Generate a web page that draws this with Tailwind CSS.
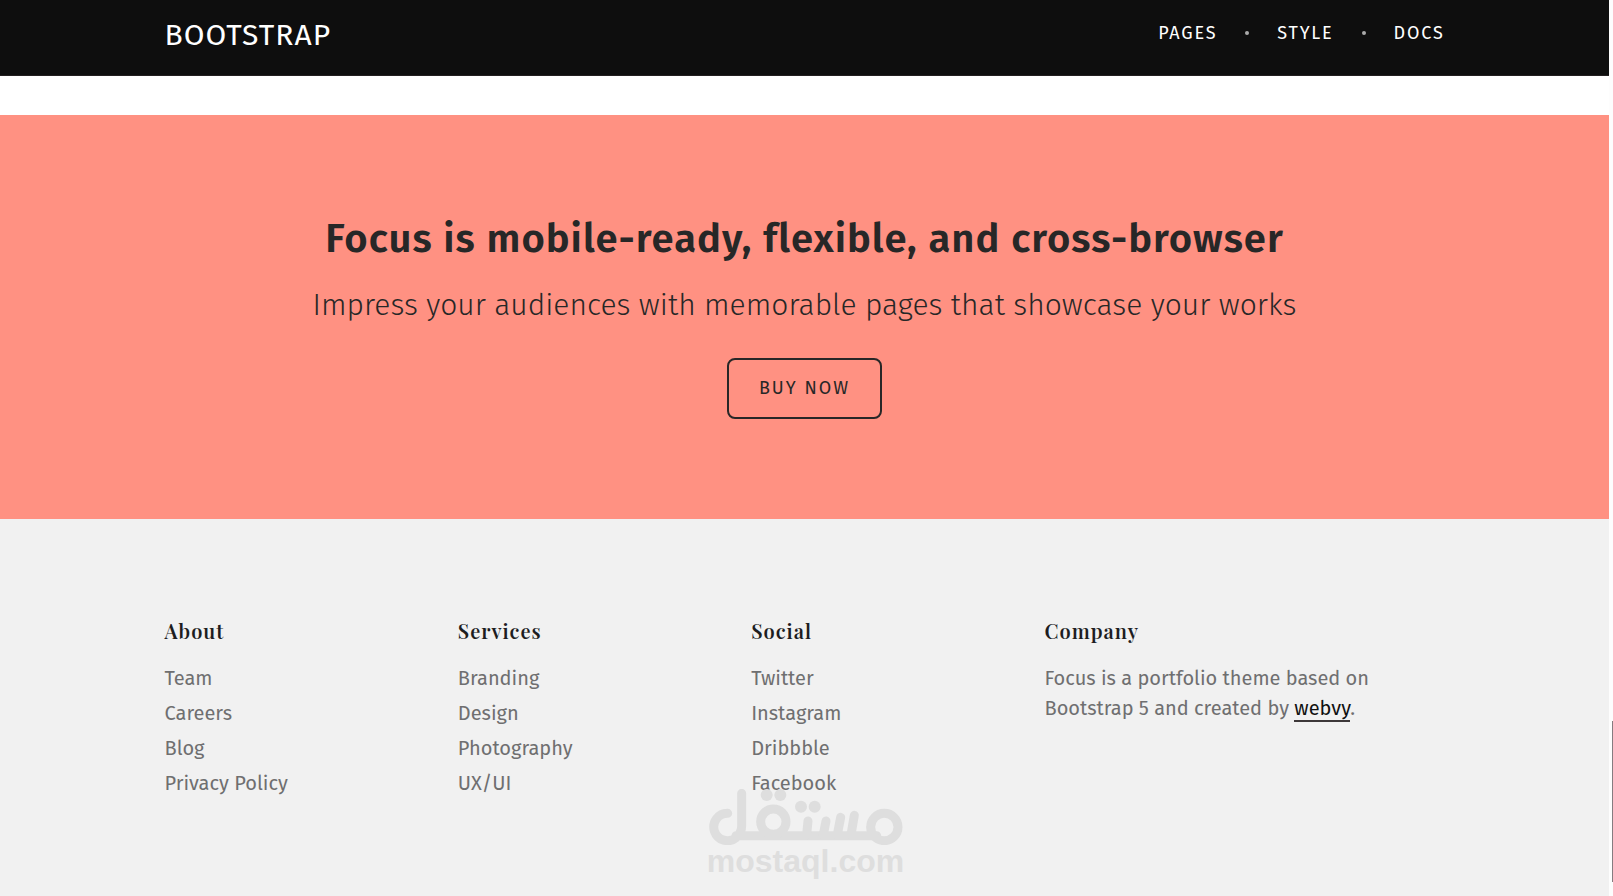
<!DOCTYPE html>
<html lang="en">
<head>
<meta charset="utf-8">
<meta name="viewport" content="width=device-width, initial-scale=1">
<title>Focus</title>
<script src="https://cdn.jsdelivr.net/npm/@tailwindcss/browser@4"></script>
</head>
<body class="relative flex min-h-screen bg-[#fdfdfd] font-['Fira_Sans','Noto_Sans',sans-serif] text-[#272727]">
<div class="flex min-w-0 flex-1 flex-col bg-white">
  <header class="border-b border-[#231f20] bg-[#0e0e0e] text-white">
    <div class="mx-auto flex h-[75px] w-full max-w-[1320px] items-center justify-between px-5">
      <a href="#" class="pb-1.5 text-[30px] leading-10 tracking-[1px]">BOOTSTRAP</a>
      <nav class="flex items-center gap-7 pb-2.5 text-lg leading-6 tracking-widest">
        <a href="#">PAGES</a>
        <span class="size-1 rounded-full bg-[#aaa]"></span>
        <a href="#">STYLE</a>
        <span class="size-1 rounded-full bg-[#aaa]"></span>
        <a href="#">DOCS</a>
      </nav>
    </div>
  </header>
  <main class="pt-[39px]">
    <section class="flex flex-col items-center bg-[#ff9182] px-5 pt-[99px] pb-[100px] text-center">
      <h2 class="text-[40px] font-semibold leading-[50px] tracking-wide">Focus is mobile-ready, flexible, and cross-browser</h2>
      <p class="mt-[19px] text-[30px] font-light leading-[45px]">Impress your audiences with memorable pages that showcase your works</p>
      <button type="button" class="mt-[30px] h-[61px] rounded-lg border-2 border-[#272727] px-[30px] pb-[2px] text-lg tracking-[2px]">BUY NOW</button>
    </section>
  </main>
  <footer class="flex-1 bg-[#f1f1f1] pt-[97px] pb-20 text-[#6f6f70]">
    <div class="mx-auto grid w-full max-w-[1320px] grid-cols-[11fr_11fr_11fr_15fr] px-5 text-xl">
      <section>
        <h3 class="font-['Playfair_Display','Liberation_Serif',serif] text-xl font-semibold leading-[30px] tracking-[1px] text-[#1d1d1f]">About</h3>
        <ul class="mt-[17px] flex flex-col gap-[5px] leading-[30px]">
          <li><a href="#">Team</a></li><li><a href="#">Careers</a></li><li><a href="#">Blog</a></li><li><a href="#">Privacy Policy</a></li>
        </ul>
      </section>
      <section>
        <h3 class="font-['Playfair_Display','Liberation_Serif',serif] text-xl font-semibold leading-[30px] tracking-[1px] text-[#1d1d1f]">Services</h3>
        <ul class="mt-[17px] flex flex-col gap-[5px] leading-[30px]">
          <li><a href="#">Branding</a></li><li><a href="#">Design</a></li><li><a href="#">Photography</a></li><li><a href="#">UX/UI</a></li>
        </ul>
      </section>
      <section>
        <h3 class="font-['Playfair_Display','Liberation_Serif',serif] text-xl font-semibold leading-[30px] tracking-[1px] text-[#1d1d1f]">Social</h3>
        <ul class="mt-[17px] flex flex-col gap-[5px] leading-[30px]">
          <li><a href="#">Twitter</a></li><li><a href="#">Instagram</a></li><li><a href="#">Dribbble</a></li><li><a href="#">Facebook</a></li>
        </ul>
      </section>
      <section>
        <h3 class="font-['Playfair_Display','Liberation_Serif',serif] text-xl font-semibold leading-[30px] tracking-[1px] text-[#1d1d1f]">Company</h3>
        <p class="mt-[17px] leading-[30px]">Focus is a portfolio theme based on<br>Bootstrap 5 and created by <a href="#" class="border-b-2 border-[#3d3839] text-[#111]">webvy</a>.</p>
      </section>
    </div>
  </footer>
</div>
<!-- scrollbar gutter -->
<div class="flex w-1 shrink-0 flex-col items-end justify-end pb-[14px]"><div class="h-[161px] w-px bg-[#857c80]"></div></div>
<!-- watermark -->
<div class="pointer-events-none absolute left-0 right-0.5 bottom-[19px] flex flex-col items-center text-[#dedede]">
  <svg class="w-[194px]" viewBox="57 87 582 169" fill="none" stroke="currentColor" stroke-width="27" stroke-linecap="round" aria-hidden="true">
    <path d="M113 160A41 41 0 1 0 138 233Q155 218 155 198V100M138 227H560"/>
    <circle cx="250" cy="185" r="38"/>
    <circle cx="583" cy="201" r="41"/>
    <path d="M354 183L350 224M408 183L400 224M452 172L442 224M493 166L483 224"/>
    <g fill="currentColor" stroke="none"><circle cx="230" cy="105" r="18"/><circle cx="271" cy="105" r="18"/><circle cx="333" cy="140" r="18"/><circle cx="374" cy="140" r="18"/></g>
  </svg>
  <span class="font-['Liberation_Sans',sans-serif] text-[32px] font-bold leading-8">mostaql.com</span>
</div>
</body>
</html>
